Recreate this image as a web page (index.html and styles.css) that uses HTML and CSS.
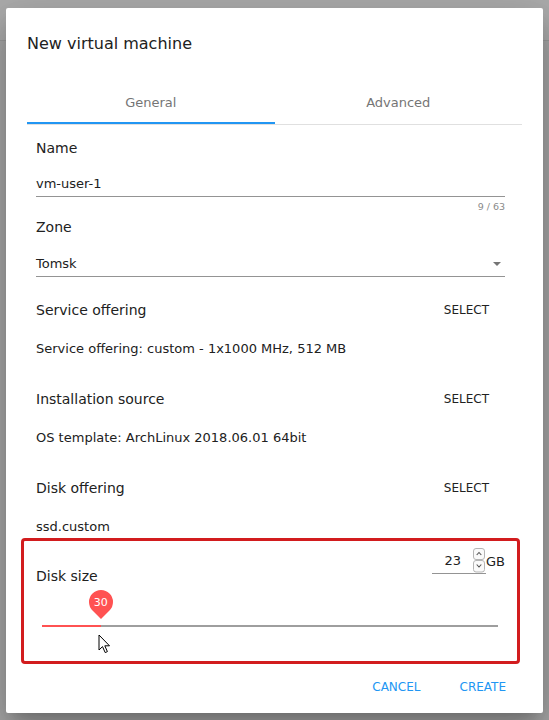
FILE: index.html
```html
<!DOCTYPE html>
<html lang="en">
<head>
<meta charset="utf-8">
<title>New virtual machine</title>
<link rel="stylesheet" href="styles.css">
</head>
<body>
<div class="appbar"></div>
<div class="dialog">
  <h2 class="title">New virtual machine</h2>
  <div class="tabs">
    <div class="tab active">General</div>
    <div class="tab">Advanced</div>
  </div>
  <div class="content">
    <div class="field field-name">
      <div class="label">Name</div>
      <div class="input"><span>vm-user-1</span></div>
      <div class="hint">9 / 63</div>
    </div>
    <div class="field field-zone">
      <div class="label">Zone</div>
      <div class="input select"><span>Tomsk</span><span class="arrow"></span></div>
    </div>
    <div class="section">
      <div class="section-head"><span class="label">Service offering</span><span class="select-btn">SELECT</span></div>
      <div class="detail">Service offering: custom - 1x1000 MHz, 512 MB</div>
    </div>
    <div class="section">
      <div class="section-head"><span class="label">Installation source</span><span class="select-btn">SELECT</span></div>
      <div class="detail">OS template: ArchLinux 2018.06.01 64bit</div>
    </div>
    <div class="section">
      <div class="section-head"><span class="label">Disk offering</span><span class="select-btn">SELECT</span></div>
      <div class="detail">ssd.custom</div>
    </div>
    <div class="highlight">
      <div class="disk-head">
        <span class="label disk-label">Disk size</span>
        <div class="number">
          <div class="num-input">
            <span class="num-value">23</span>
            <svg class="spin" width="12" height="25" viewBox="0 0 12 25">
              <rect x="0.5" y="0.5" width="11" height="11" rx="2.5" fill="#fafafa" stroke="#b5b5b5"/>
              <rect x="0.5" y="12.5" width="11" height="11.5" rx="2.5" fill="#fafafa" stroke="#b5b5b5"/>
              <path d="M3.7 7 L6 4.5 L8.3 7" fill="none" stroke="#555" stroke-width="1.1"/>
              <path d="M3.7 16.5 L6 19 L8.3 16.5" fill="none" stroke="#555" stroke-width="1.1"/>
            </svg>
          </div>
          <span class="unit">GB</span>
        </div>
      </div>
      <div class="slider">
        <div class="track">
          <div class="fill" style="width:12.9%"></div>
          <div class="thumb" style="left:12.9%"><span>30</span></div>
          <svg class="cursor" width="13" height="20" viewBox="0 0 13 20">
            <path d="M1 1 L1 16 L4.5 12.6 L7.2 18.6 L9.4 17.6 L6.8 11.8 L11.5 11.8 Z" fill="#fff" stroke="#000" stroke-width="1" stroke-linejoin="round"/>
          </svg>
        </div>
      </div>
    </div>
  </div>
  <div class="actions">
    <button class="btn">CANCEL</button>
    <button class="btn">CREATE</button>
  </div>
</div>
</body>
</html>
```
FILE: styles.css
```css
html, body {
  margin: 0;
  height: 720px;
  overflow: hidden;
}
body {
  background: #a8a8a8;
  font-family: "DejaVu Sans", sans-serif;
  color: #212121;
}
.appbar {
  height: 40px;
  background: #acacac;
  border-bottom: 1px solid #9b9b9b;
}
.dialog {
  position: absolute;
  left: 6px;
  top: 8px;
  width: 537px;
  height: 705px;
  box-sizing: border-box;
  background: #fff;
  border-radius: 2px;
  box-shadow: 0 11px 15px -7px rgba(0,0,0,.2), 0 24px 38px 3px rgba(0,0,0,.14), 0 9px 46px 8px rgba(0,0,0,.12);
  padding: 24px 21px 0 21px;
  display: flex;
  flex-direction: column;
}
.title {
  margin: 0;
  font-size: 16px;
  line-height: 24px;
  font-weight: normal;
  color: #212121;
}
.tabs {
  margin-top: 24px;
  display: flex;
  border-bottom: 1px solid #e0e0e0;
}
.tab {
  flex: 1;
  height: 44px;
  box-sizing: border-box;
  padding-top: 2px;
  border-bottom: 2px solid transparent;
  display: flex;
  align-items: center;
  justify-content: center;
  font-size: 13px;
  color: #757575;
}
.tab.active {
  border-bottom-color: #2196f3;
}
.content {
  padding: 0 17px 0 9px;
  display: flex;
  flex-direction: column;
}
.label {
  font-size: 14px;
  line-height: 20px;
  color: #212121;
}
.field-name {
  padding-top: 13px;
}
.field-zone {
  padding-bottom: 15px;
}
.input {
  margin-top: 16px;
  padding-bottom: 2px;
  line-height: 20px;
  font-size: 13px;
  border-bottom: 1px solid #949494;
  display: flex;
  align-items: center;
  justify-content: space-between;
}
.field-zone .input {
  margin-top: 17px;
}
.arrow {
  width: 0;
  height: 0;
  border-left: 4px solid transparent;
  border-right: 4px solid transparent;
  border-top: 4px solid #757575;
  margin-right: 4px;
}
.hint {
  height: 20px;
  line-height: 20px;
  font-size: 9.5px;
  text-align: right;
  color: #8a8a8a;
}
.section + .section {
  margin-top: 22px;
}
.section-head {
  height: 36px;
  display: flex;
  align-items: center;
  justify-content: space-between;
}
.select-btn {
  padding: 0 16px;
  font-size: 12px;
  color: #212121;
}
.detail {
  margin-top: 11px;
  font-size: 13px;
  line-height: 20px;
  color: #212121;
}
.highlight {
  margin: 1px -15px 0 -15px;
  height: 126px;
  box-sizing: border-box;
  border: 3px solid #d21c1e;
  border-radius: 4px;
  padding: 0 12px;
}
.disk-head {
  height: 46px;
  display: flex;
  align-items: flex-start;
  justify-content: space-between;
}
.disk-label {
  margin-top: 25px;
}
.number {
  margin-top: 7px;
  display: flex;
  align-items: center;
}
.num-input {
  width: 54px;
  height: 25px;
  border-bottom: 1px solid #949494;
  display: flex;
  align-items: center;
  justify-content: flex-end;
}
.num-value {
  font-size: 13px;
  line-height: 20px;
  margin-right: 12px;
}
.spin {
  display: block;
  margin-right: 1px;
}
.unit {
  font-size: 13px;
  color: #212121;
}
.slider {
  margin-top: 38px;
  padding: 0 7px 0 6px;
}
.track {
  position: relative;
  height: 2px;
  background: #9e9e9e;
}
.fill {
  height: 2px;
  background: #ff5252;
}
.thumb {
  position: absolute;
  top: -35px;
  width: 24px;
  height: 24px;
  margin-left: -12px;
  display: flex;
  align-items: center;
  justify-content: center;
  color: #fff;
  font-size: 11px;
}
.thumb::before {
  content: "";
  position: absolute;
  inset: 0;
  background: #ff5252;
  border-radius: 50% 50% 0 50%;
  transform: rotate(45deg);
}
.thumb span {
  position: relative;
}
.cursor {
  position: absolute;
  left: 56px;
  top: 9px;
}
.actions {
  margin-top: auto;
  padding-bottom: 8px;
  display: flex;
  justify-content: flex-end;
  gap: 7px;
}
.btn {
  height: 36px;
  padding: 0 16px;
  border: none;
  background: none;
  font-family: "DejaVu Sans", sans-serif;
  font-size: 12px;
  color: #2196f3;
}
```
